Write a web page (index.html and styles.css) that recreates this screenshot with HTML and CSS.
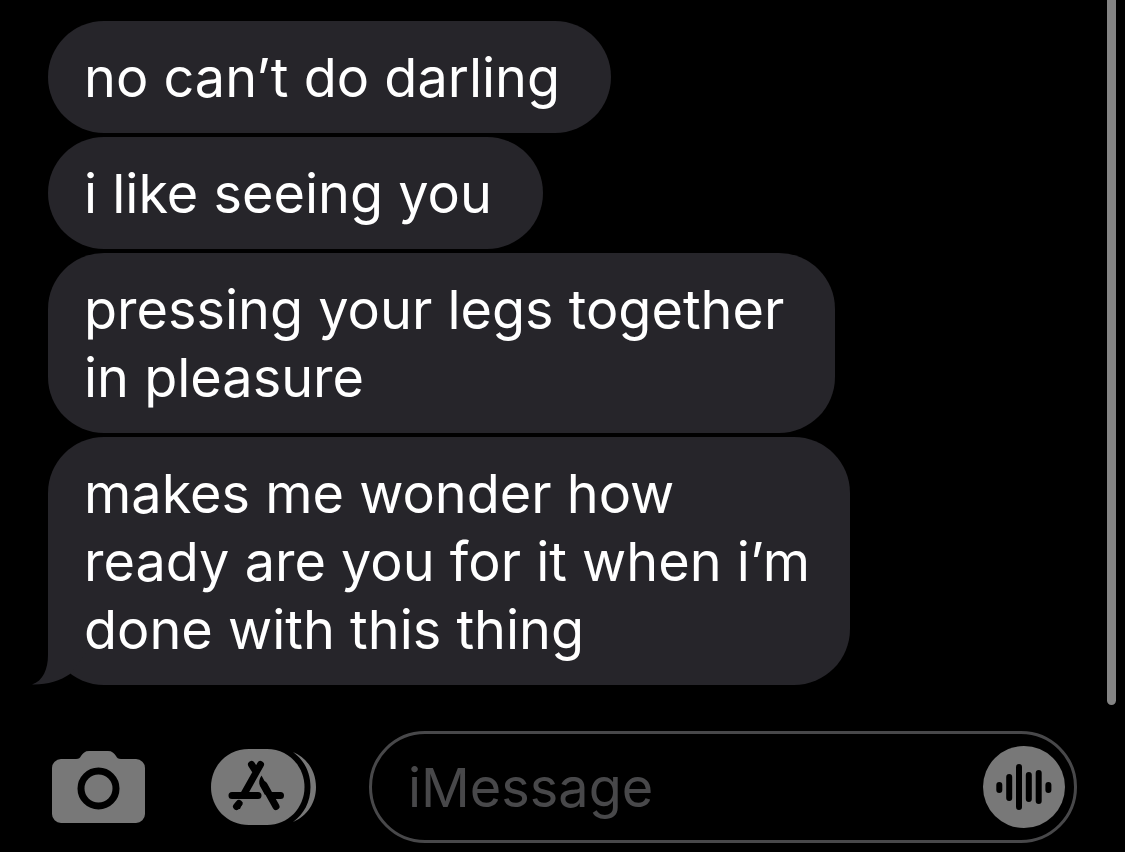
FILE: index.html
```html
<!DOCTYPE html>
<html lang="en">
<head>
    <meta charset="UTF-8">
    <meta name="viewport" content="width=device-width, initial-scale=1.0">
    <title>Messages</title>
    <link rel="stylesheet" href="styles.css">
</head>
<body>
    <main class="thread">
        <p class="bubble">no can’t do darling</p>
        <p class="bubble">i like seeing you</p>
        <p class="bubble">pressing your legs together<br>in pleasure</p>
        <p class="bubble last">makes me wonder how<br>ready are you for it when i’m<br>done with this thing
            <svg class="tail" viewBox="0 0 60 60" aria-hidden="true">
                <path d="M16 0V30C16 44 11 56 0 59.500C14 60 28 56 38 49L60 20V0Z"/>
            </svg>
        </p>
        <div class="scrollbar"></div>
    </main>
    <form class="composer">
        <button type="button" class="icon-button" aria-label="Camera">
            <svg width="93" height="72" viewBox="0 0 93 72">
                <path fill="#787878" d="M9 8H24C27 8 28 7 29 5C31 2 33 0 37 0H56C60 0 62 2 64 5C65 7 66 8 69 8H84A9 9 0 0 1 93 17V63A9 9 0 0 1 84 72H9A9 9 0 0 1 0 63V17A9 9 0 0 1 9 8Z"/>
                <circle cx="46.5" cy="37.5" r="17.5" fill="none" stroke="#000" stroke-width="7"/>
            </svg>
        </button>
        <button type="button" class="icon-button" aria-label="Apps">
            <svg width="105" height="76" viewBox="0 0 105 76">
                <path fill="#787878" d="M38 0H56C77 0 93.5 17 93.5 38S77 76 56 76H38C16 76 0 59 0 38S16 0 38 0Z"/>
                <path fill="#787878" d="M82 3C96 9 105 22 105 38S96 67 82 73C93 65 99.5 53 99.5 38S93 11 82 3Z"/>
                <g fill="none" stroke="#000" stroke-width="7" stroke-linecap="round">
                    <path d="M49.5 15.5L33 45M40.5 15.5L44 21M21 46.5H47M61 46.5H69.5M28 54.5L25.5 57.5"/>
                    <path d="M53 36L65 57.5"/>
                </g>
                <path fill="#000" d="M50.5 26.5C48 30 47.5 34 49 37L54 46L59 42Z"/>
                <path fill="#000" d="M27 53L31.5 53L29 60L25 60Z"/>
            </svg>
        </button>
        <div class="field">
            <input type="text" class="message-input" placeholder="iMessage" aria-label="iMessage">
            <button type="button" class="icon-button" aria-label="Record audio">
                <svg width="82" height="82" viewBox="0 0 82 82">
                    <circle cx="41" cy="41" r="41" fill="#787878"/>
                    <path stroke="#000" stroke-width="6" stroke-linecap="round" d="M16.3 39V44M26.2 31V52M36 21V61M45.8 29V53M55.7 27V55M65.4 39V44"/>
                </svg>
            </button>
        </div>
    </form>
</body>
</html>
```
FILE: styles.css
```css
* {
    box-sizing: border-box;
}
body {
    margin: 0;
    min-height: 100vh;
    display: flex;
    flex-direction: column;
    background-color: #000;
    color: #fff;
    font-family: Inter, "Liberation Sans", sans-serif;
    font-size: 54px;
}
.thread {
    position: relative;
    flex: 1;
    display: flex;
    flex-direction: column;
    align-items: flex-start;
    gap: 4px;
    padding: 21px 48px 20px;
}
.bubble {
    position: relative;
    isolation: isolate;
    margin: 0;
    padding: 23px 51px 21px 36px;
    border-radius: 56px;
    background-color: #26252a;
    line-height: 68px;
}
.bubble.last {
    padding-right: 40px;
}
.tail {
    position: absolute;
    z-index: -1;
    left: -16px;
    bottom: 0;
    width: 60px;
    height: 60px;
    fill: #26252a;
}
.scrollbar {
    position: absolute;
    top: 0;
    right: 9px;
    bottom: 0;
    width: 9px;
    border-radius: 0 0 5px 5px;
    background-color: #848484;
}
.composer {
    display: flex;
    align-items: center;
    padding: 26px 48px 9px 52px;
}
.icon-button {
    display: flex;
    flex: none;
    margin: 0;
    padding: 0;
    border: none;
    background: none;
    cursor: pointer;
}
.composer > .icon-button {
    margin-right: 66px;
}
.composer > .icon-button + .icon-button {
    margin-right: 53px;
}
.field {
    flex: 1;
    min-width: 0;
    height: 112px;
    display: flex;
    align-items: center;
    padding: 0 9px 0 36px;
    border: 3px solid #48484a;
    border-radius: 56px;
}
.message-input {
    flex: 1;
    min-width: 0;
    padding: 2px 0 0;
    border: none;
    outline: none;
    background: none;
    color: #fff;
    font: inherit;
    line-height: 68px;
}
.message-input::placeholder {
    color: #48484a;
    opacity: 1;
}
```
